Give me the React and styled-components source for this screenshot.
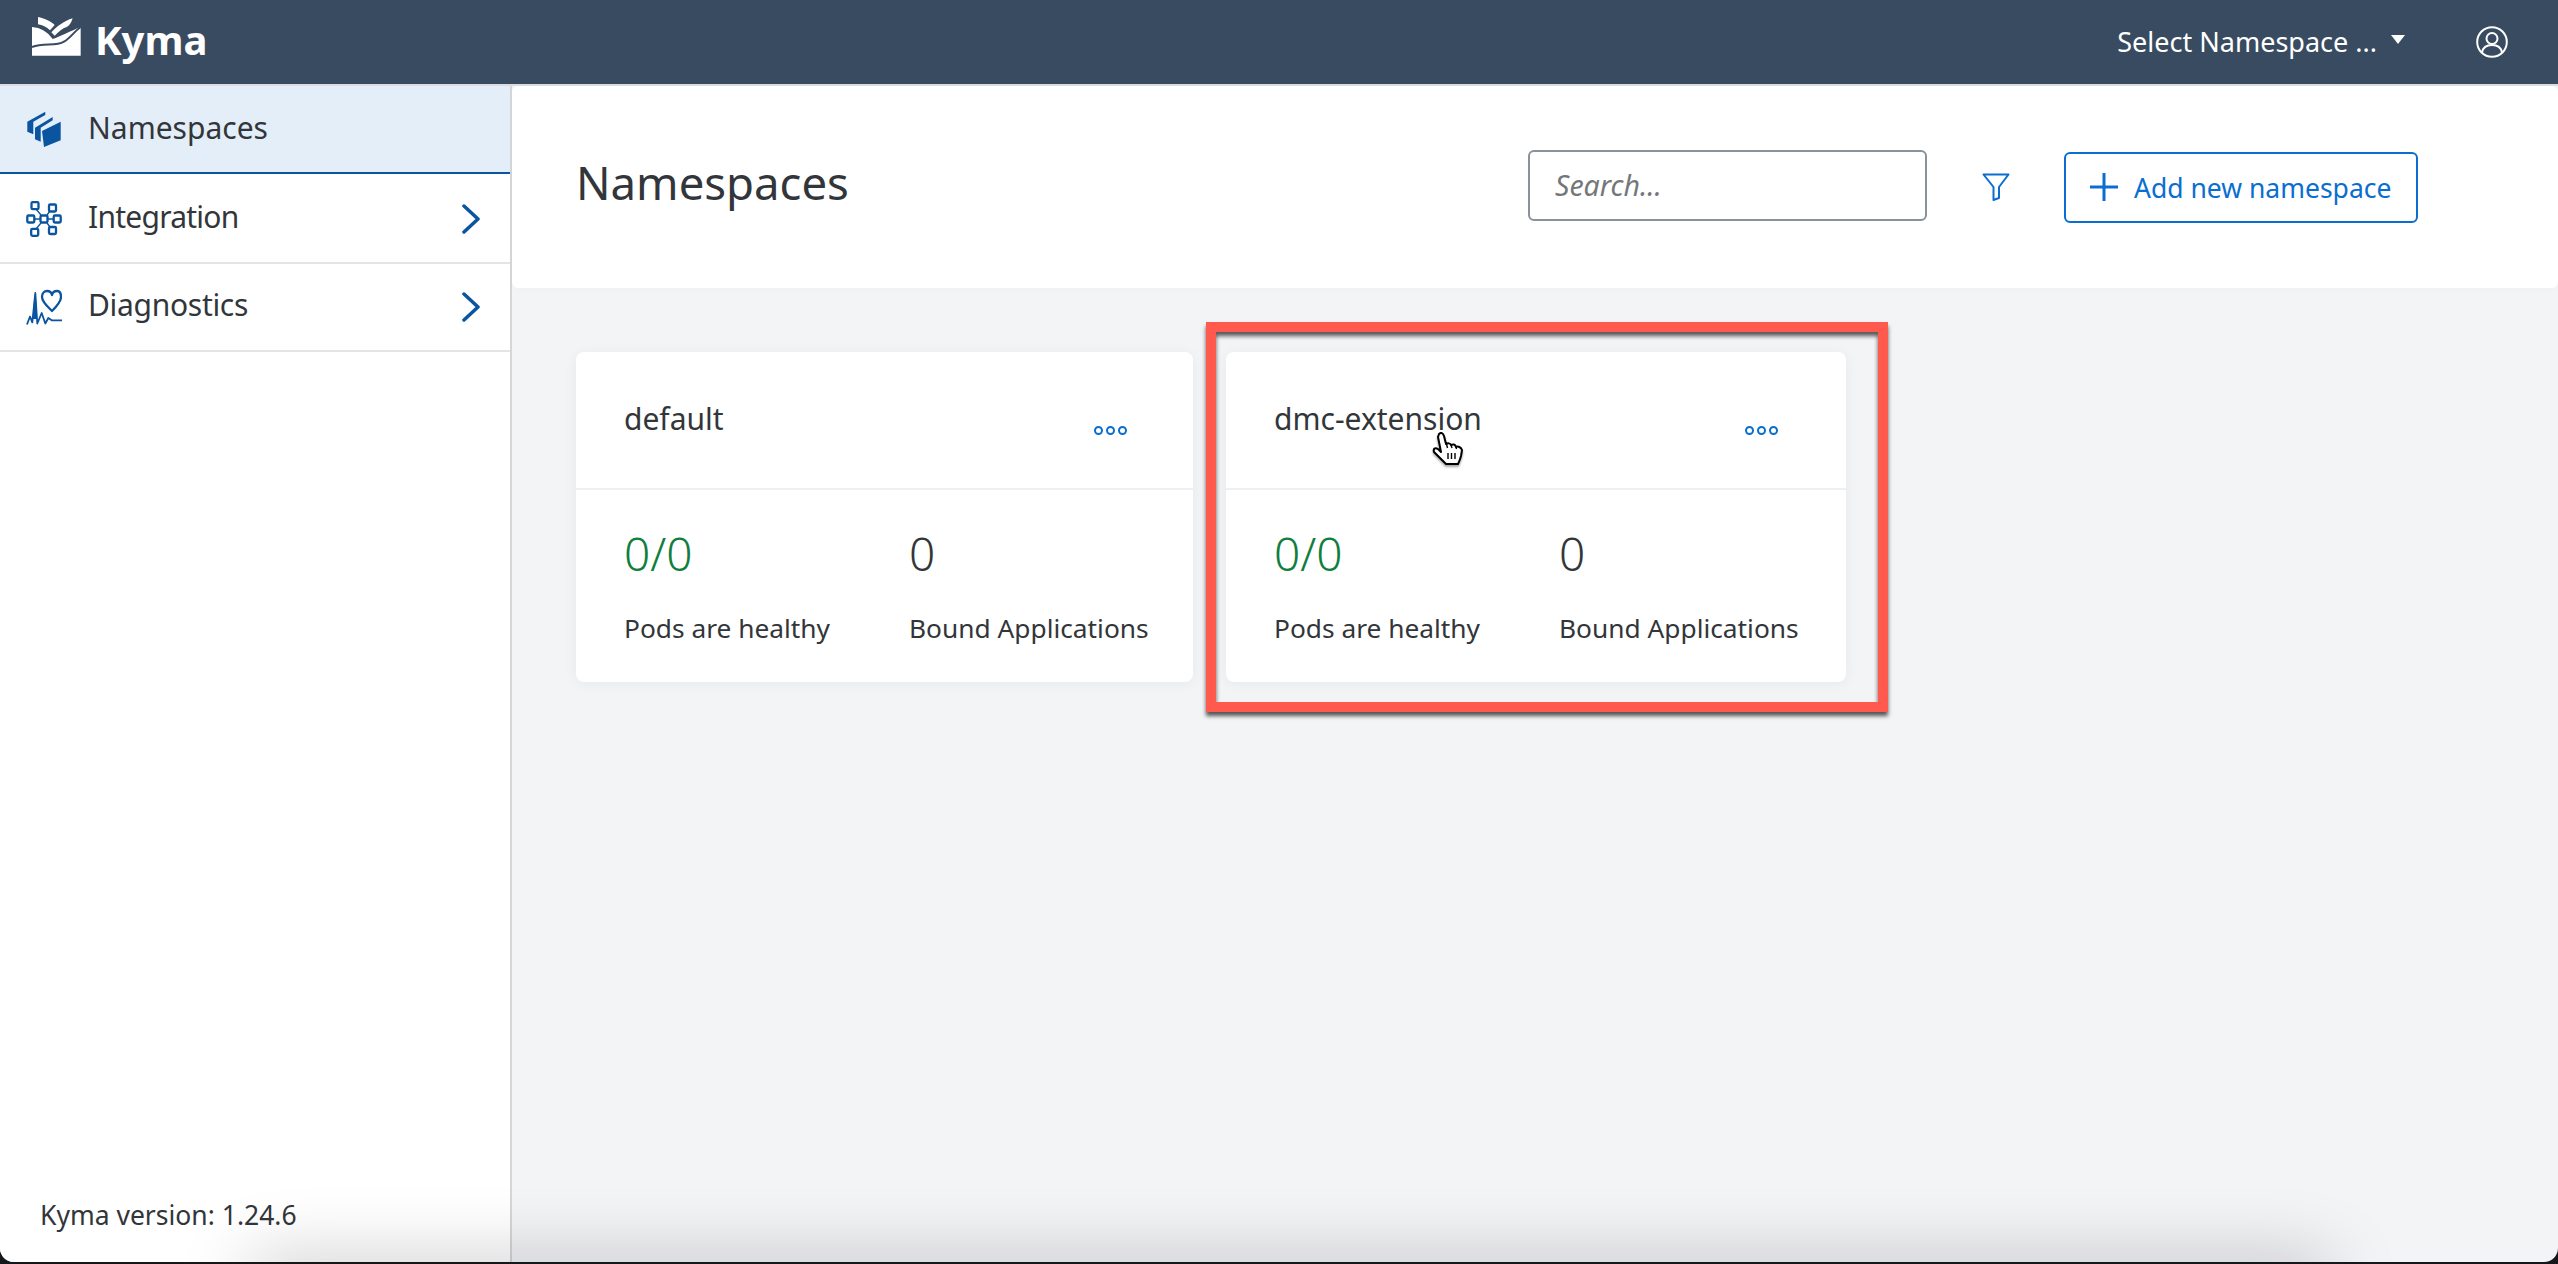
import React from "react";
import styled, { createGlobalStyle } from "styled-components";

const Global = createGlobalStyle`
  html, body { margin: 0; padding: 0; background: #111; }
  * { box-sizing: border-box; }
  body { font-family: "Noto Sans", "Open Sans", Arial, sans-serif; color: #32363a; }
`;

const Frame = styled.div`
  position: relative;
  width: 100%;
  height: 1264px;
  overflow: hidden;
  background: #14181a;
  padding-bottom: 2px;
`;
const Screen = styled.div`
  position: relative;
  height: 100%;
  display: flex;
  flex-direction: column;
  overflow: hidden;
  border-radius: 0 0 14px 14px;
  background: #f3f4f6;
`;
const TopBar = styled.header`
  height: 84px;
  flex: none;
  display: flex;
  align-items: center;
  justify-content: space-between;
  background: #384b60;
  padding: 0 50px 0 32px;
`;
const Brand = styled.div`
  display: flex;
  align-items: center;
  gap: 13px;
  color: #fff;
  font-weight: 700;
  font-size: 40px;
  line-height: 1;
  margin-top: -4px;
`;
const BrandMark = styled.svg`
  width: 66px;
  height: 52px;
  flex: none;
  margin: 0 -8px 6px -8px;
`;
const TopActions = styled.div`
  display: flex;
  align-items: center;
  color: #fff;
  font-size: 27px;
`;
const NamespaceSelect = styled.span`
  display: block;
  line-height: 1;
  margin-top: -2px;
`;
const Caret = styled.span`
  width: 0;
  height: 0;
  margin: -6px 71px 0 14px;
  border-left: 7px solid transparent;
  border-right: 7px solid transparent;
  border-top: 9px solid #fff;
`;
const Body = styled.div`
  flex: 1;
  min-height: 0;
  display: flex;
  border-top: 2px solid #dcdddf;
`;
const Sidebar = styled.aside`
  width: 512px;
  flex: none;
  display: flex;
  flex-direction: column;
  background: #fff;
  border-right: 2px solid #d4d6d9;
`;
const NavRow = styled.div`
  height: 88px;
  display: flex;
  align-items: center;
  padding: 0 30px 0 26px;
  margin-bottom: ${p => (p.$active ? "2px" : "0")};
  font-size: 30px;
  letter-spacing: ${p => p.$track || 0}px;
  background: ${p => (p.$active ? "#e3eef9" : "#fff")};
  border-bottom: 2px solid ${p => (p.$active ? "#0a54a0" : "#e4e4e4")};
`;
const NavIcon = styled.svg`
  width: 36px;
  height: 36px;
  flex: none;
  margin-right: 26px;
  color: #0a54a0;
`;
const NavLabel = styled.span`
  flex: 1;
  margin-top: ${p => (p.$active ? "-4px" : "-6px")};
`;
const Chevron = styled.svg`
  width: 18px;
  height: 30px;
  flex: none;
  color: #0a54a0;
`;
const SideFooter = styled.div`
  margin-top: auto;
  padding: 0 0 32px 40px;
  font-size: 26.5px;
  line-height: 30px;
`;
const Main = styled.main`
  flex: 1;
  min-width: 0;
  display: flex;
  flex-direction: column;
`;
const PageHeader = styled.div`
  height: 202px;
  flex: none;
  display: flex;
  align-items: center;
  background: #fff;
  border-radius: 6px;
  box-shadow: 0 2px 6px rgba(0, 0, 0, 0.02);
  padding: 0 140px 0 64px;
`;
const Title = styled.h1`
  margin: 0 auto 10px 0;
  font-size: 45.500px;
  font-weight: 400;
  line-height: 1.2;
`;
const SearchBox = styled.div`
  width: 399px;
  height: 71px;
  display: flex;
  align-items: center;
  margin-bottom: 4px;
  padding-left: 25px;
  border: 2px solid #89919a;
  border-radius: 6px;
  color: #74777a;
  font-size: 28.500px;
  font-style: italic;
`;
const FilterIcon = styled.svg`
  width: 28px;
  height: 28px;
  flex: none;
  margin: 0 54px 0 55px;
  color: #0a6ed1;
`;
const AddButton = styled.div`
  width: 354px;
  height: 71px;
  display: flex;
  align-items: center;
  gap: 16px;
  padding-left: 24px;
  border: 2px solid #0a6ed1;
  border-radius: 6px;
  color: #0a6ed1;
  font-size: 26.500px;
`;
const AddLabel = styled.span`
  margin-top: 2px;
`;
const PlusIcon = styled.svg`
  width: 28px;
  height: 28px;
  flex: none;
  color: #0a6ed1;
`;
const CardGrid = styled.section`
  display: grid;
  grid-template-columns: 617px 620px;
  column-gap: 33px;
  padding: 64px 0 0 64px;
`;
const Card = styled.article`
  position: relative;
  height: 330px;
  background: #fff;
  border-radius: 8px;
  box-shadow: 0 2px 14px rgba(0, 0, 0, 0.05);
`;
const CardHead = styled.div`
  height: 138px;
  display: flex;
  justify-content: space-between;
  align-items: center;
  padding: 0 ${p => p.$right}px 0 48px;
  border-bottom: 2px solid #eeeff0;
`;
const CardTitle = styled.h2`
  margin: -2px 0 0;
  font-size: 30px;
  font-weight: 400;
  line-height: 40px;
`;
const Dots = styled.div`
  display: flex;
  gap: 3px;
  margin-top: 20px;
`;
const Dot = styled.i`
  width: 9px;
  height: 9px;
  border: 2px solid #0a6ed1;
  border-radius: 50%;
`;
const Stats = styled.div`
  display: grid;
  grid-template-columns: 285px 1fr;
  padding: 33px 0 0 48px;
`;
const Stat = styled.div`
  display: flex;
  flex-direction: column;
  gap: 25px;
`;
const StatValue = styled.div`
  font-size: 46px;
  font-weight: 300;
  line-height: 60px;
  color: ${p => (p.$good ? "#107e3e" : "#32363a")};
`;
const StatLabel = styled.div`
  font-size: 26.300px;
  line-height: 40px;
  white-space: nowrap;
`;
const Highlight = styled.div`
  position: absolute;
  top: -30px;
  bottom: -30px;
  left: -20px;
  right: -42px;
  border: 10px solid #ff5a4d;
  box-shadow: 0 4px 4px rgba(0, 0, 0, 0.65), inset 0 4px 4px rgba(0, 0, 0, 0.65);
  pointer-events: none;
`;
const Pointer = styled.svg`
  position: absolute;
  left: 206px;
  top: 80px;
  width: 32px;
  height: 34px;
  filter: drop-shadow(0 2px 1px rgba(0, 0, 0, 0.35));
`;
const BottomShade = styled.div`
  position: absolute;
  left: 250px;
  right: 230px;
  bottom: -40px;
  height: 40px;
  box-shadow: 0 0 70px rgba(0, 0, 0, 0.26);
  pointer-events: none;
`;

const Logo = () => (
  <BrandMark viewBox="0 0 198 156">
    <path fill="#fff" d="M42 18C60 22 80 30 92 42L78 58C68 48 55 42 42 40Z" />
    <path fill="#fff" d="M82 64C100 45 120 30 146 22C142 35 136 45 128 48C115 52 105 62 92 74Z" />
    <path fill="#fff" d="M24 48C50 50 70 62 86 84C110 76 140 60 170 48V134H24Z" />
    <path fill="none" stroke="#384b60" strokeWidth="6" d="M24 108C60 94 95 108 120 92C140 80 150 62 170 48" />
  </BrandMark>
);

const NamespacesGlyph = () => (
  <NavIcon viewBox="0 0 36 36" fill="currentColor">
    <path d="M1.300 10.700 19.300.7V4L7.300 10.700V23.300L1.300 20.700Z" />
    <path d="M9 16.700 26.700 6V9.300L14.700 16.700V30.700L9 28.300Z" />
    <path d="M16 20 34.700 10.700V29.300L18 36Z" />
  </NavIcon>
);
const IntegrationGlyph = () => (
  <NavIcon viewBox="0 0 36 36" fill="none" stroke="currentColor">
    <g strokeWidth="1.300">
      <path d="M10 8 15 14M24 10 21 14M8 18H14M22 18H28M10 28 15 22M24 26 21 22" />
    </g>
    <g strokeWidth="2.300">
      <rect x="5.500" y="1.200" width="7" height="7" rx="1.200" />
      <rect x="23" y="3.500" width="7" height="7" rx="1.200" />
      <rect x="1.300" y="14.500" width="7" height="7" rx="1.200" />
      <rect x="14.500" y="14.500" width="7" height="7" rx="1.200" />
      <rect x="27.700" y="14.500" width="7" height="7" rx="1.200" />
      <rect x="5.200" y="27.800" width="7" height="7" rx="1.200" />
      <rect x="23" y="26" width="7" height="7" rx="1.200" />
    </g>
  </NavIcon>
);
const DiagnosticsGlyph = () => (
  <NavIcon viewBox="0 0 36 36" fill="none" stroke="currentColor">
    <path strokeWidth="2.300" strokeLinejoin="round" d="M26 22C22 18 16 13 16 8 16 4 18.500 2 21 2 23.500 2 25.500 3.500 26 6 26.500 3.500 28.500 2 31 2 33.500 2 35 4 35 8 35 13 30 18 26 22Z" />
    <path strokeWidth="1.800" strokeLinejoin="round" d="M1 35.500 4 27.500 6.300 33.300 9.300 4 11.300 34.500 15.700 24 19.300 34.500 22.300 29 25.700 31.300H36" />
    <path fill="currentColor" stroke="none" d="M7.500 16 9.300 3 10.800 18 11 30H7Z" />
  </NavIcon>
);
const ChevronGlyph = () => (
  <Chevron viewBox="0 0 18 30" fill="none" stroke="currentColor" strokeWidth="3.500" strokeLinecap="round" strokeLinejoin="round">
    <path d="M2 2 16 15 2 28" />
  </Chevron>
);
const UserIcon = () => (
  <svg width="32" height="32" viewBox="0 0 32 32" fill="none" stroke="#fff" strokeWidth="2">
    <circle cx="16" cy="16" r="14.800" />
    <circle cx="16" cy="12.500" r="5.500" />
    <path d="M6 26.500C7 21 11 19 16 19S25 21 26 26.500" />
  </svg>
);
const PointerGlyph = () => (
  <Pointer viewBox="0 0 32 34">
    <path
      fill="#fff"
      stroke="#000"
      strokeWidth="2"
      strokeLinejoin="round"
      d="M7 2C9 0 11 1 12 4L14 12C16 11 18 11 19 13C21 12 23 12 24 15C26 14 29 15 30 18L29 24C28 28 27 30 26 32L14 32 9 27 2 20C1 17 3 15 6 17L9 20 6 5Z"
    />
    <path stroke="#000" strokeWidth="1.400" d="M16 21V27M19.500 21V27M23 21V27M14.500 12 15.500 16M19 13 20 16M24 15 24.500 17" />
  </Pointer>
);

const namespaces = [
  { name: "default", right: 66 },
  { name: "dmc-extension", right: 68, selected: true },
];

const NamespaceCard = ({ name, right, selected }) => (
  <Card>
    <CardHead $right={right}>
      <CardTitle>{name}</CardTitle>
      <Dots>
        <Dot />
        <Dot />
        <Dot />
      </Dots>
    </CardHead>
    <Stats>
      <Stat>
        <StatValue $good>0/0</StatValue>
        <StatLabel>Pods are healthy</StatLabel>
      </Stat>
      <Stat>
        <StatValue>0</StatValue>
        <StatLabel>Bound Applications</StatLabel>
      </Stat>
    </Stats>
    {selected && (
      <>
        <Highlight />
        <PointerGlyph />
      </>
    )}
  </Card>
);

export default function App() {
  return (
    <Frame>
      <Global />
      <Screen>
        <TopBar>
          <Brand>
            <Logo />
            Kyma
          </Brand>
          <TopActions>
            <NamespaceSelect>Select Namespace ...</NamespaceSelect>
            <Caret />
            <UserIcon />
          </TopActions>
        </TopBar>
        <Body>
          <Sidebar>
            <NavRow $active>
              <NamespacesGlyph />
              <NavLabel $active>Namespaces</NavLabel>
            </NavRow>
            <NavRow $track={-0.75}>
              <IntegrationGlyph />
              <NavLabel>Integration</NavLabel>
              <ChevronGlyph />
            </NavRow>
            <NavRow $track={-0.3}>
              <DiagnosticsGlyph />
              <NavLabel>Diagnostics</NavLabel>
              <ChevronGlyph />
            </NavRow>
            <SideFooter>Kyma version: 1.24.6</SideFooter>
          </Sidebar>
          <Main>
            <PageHeader>
              <Title>Namespaces</Title>
              <SearchBox>Search...</SearchBox>
              <FilterIcon viewBox="0 0 28 28" fill="none" stroke="currentColor" strokeWidth="2" strokeLinejoin="round">
                <path d="M1.500 1.500H26.500L17 14V25L11.500 27V14Z" />
              </FilterIcon>
              <AddButton>
                <PlusIcon viewBox="0 0 28 28" fill="currentColor">
                  <path d="M12.500 0H15.500V12.500H28V15.500H15.500V28H12.500V15.500H0V12.500H12.500Z" />
                </PlusIcon>
                <AddLabel>Add new namespace</AddLabel>
              </AddButton>
            </PageHeader>
            <CardGrid>
              {namespaces.map(ns => (
                <NamespaceCard key={ns.name} {...ns} />
              ))}
            </CardGrid>
          </Main>
        </Body>
        <BottomShade />
      </Screen>
    </Frame>
  );
}
